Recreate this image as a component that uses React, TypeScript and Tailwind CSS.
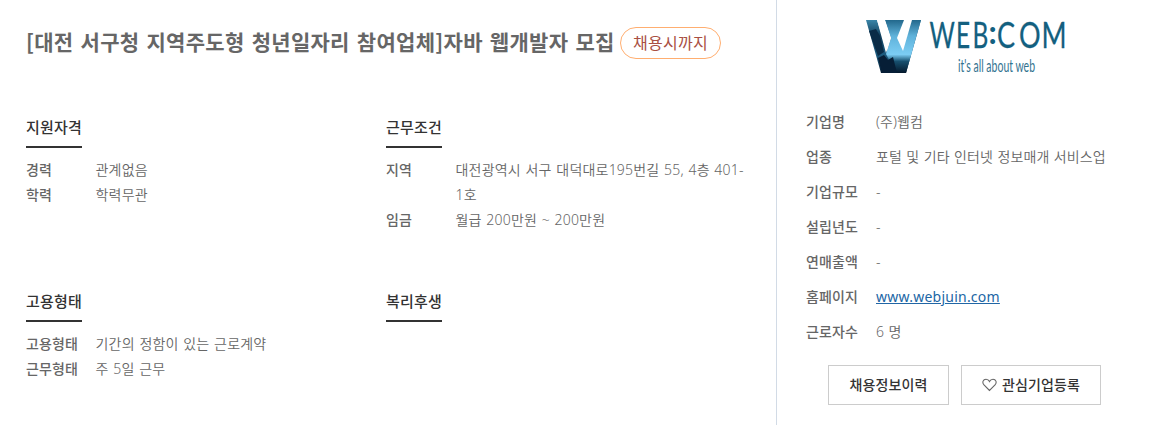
import React from 'react';

type Item = { label: string; value: string };

const sections: { title: string; items: Item[] }[] = [
  {
    title: '지원자격',
    items: [
      { label: '경력', value: '관계없음' },
      { label: '학력', value: '학력무관' },
    ],
  },
  {
    title: '근무조건',
    items: [
      { label: '지역', value: '대전광역시 서구 대덕대로195번길 55, 4층 401-\n1호' },
      { label: '임금', value: '월급 200만원 ~ 200만원' },
    ],
  },
  {
    title: '고용형태',
    items: [
      { label: '고용형태', value: '기간의 정함이 있는 근로계약' },
      { label: '근무형태', value: '주 5일 근무' },
    ],
  },
  { title: '복리후생', items: [] },
];

const company: Item[] = [
  { label: '기업명', value: '(주)웹컴' },
  { label: '업종', value: '포털 및 기타 인터넷 정보매개 서비스업' },
  { label: '기업규모', value: '-' },
  { label: '설립년도', value: '-' },
  { label: '연매출액', value: '-' },
  { label: '홈페이지', value: 'www.webjuin.com' },
  { label: '근로자수', value: '6 명' },
];

const Logo = () => (
  <svg width="220" height="62" viewBox="0 0 220 62" className="block overflow-visible">
    <defs>
      <linearGradient id="mark" x1="0" y1="0" x2="0" y2="1">
        <stop offset="0" stopColor="#3b86a8" />
        <stop offset="0.3" stopColor="#123f5c" />
        <stop offset="0.65" stopColor="#1d5c80" />
        <stop offset="1" stopColor="#041c33" />
      </linearGradient>
      <linearGradient id="markLight" x1="0" y1="0" x2="0" y2="1">
        <stop offset="0" stopColor="#22688c" />
        <stop offset="0.3" stopColor="#5fb2da" />
        <stop offset="0.65" stopColor="#7ccdf4" />
        <stop offset="0.78" stopColor="#17506f" />
        <stop offset="1" stopColor="#04182c" />
      </linearGradient>
    </defs>
    <path d="M0 2H11L20 35L25 20L19 2H55L40 55H30L27 48L25 55H15Z" fill="url(#mark)" />
    <path d="M19 2H55L40 55H30L20 36L25 20Z" fill="url(#markLight)" />
    {/* white cuts between the strokes */}
    <path d="M11 2H19L25 20L21 33Z" fill="#fff" />
    <path d="M38 2H46L37 33L31 20Z" fill="#fff" />
    {/* dark facets */}
    <path d="M3 13L10 11L14 18L18 34L12 38Z" fill="#0a2c47" />
    <path d="M12 40L18 37L22 42L27 39L31 55H25L16 55Z" fill="#061e36" />
    <g fontFamily="Lato, sans-serif" fontSize="37" fill="#13607f">
      <text transform="translate(63.5 30) scale(0.66 1)" x="0 40 65" stroke="#13607f" strokeWidth="0.3">WEB</text>
      <text transform="translate(122.5 26)" fontSize="32" fontWeight="700">:</text>
      <text transform="translate(131 30) scale(0.73 1)" x="0 30 61" stroke="#13607f" strokeWidth="0.3">COM</text>
    </g>
    <text x="92" y="54" textLength="77" lengthAdjust="spacingAndGlyphs" fontFamily="Lato, sans-serif" fontSize="17" fill="#337390">it's all about web</text>
  </svg>
);

function App() {
  return (
    <div className="flex h-[425px] w-[1149px] overflow-hidden bg-white font-['Noto_Sans_CJK_KR',sans-serif] text-sm text-[#666]">
      <main className="w-[777px] shrink-0 border-r border-[#d2dbe6] pl-[26px]">
        <div className="flex items-center pt-[26px]">
          <h1 className="w-[594px] pb-[2px] text-[21px] leading-[31px] font-bold tracking-[0.3px] whitespace-nowrap [word-spacing:2px]">
            [대전 서구청 지역주도형 청년일자리 참여업체]자바 웹개발자 모집
          </h1>
          <span className="flex h-8 w-[101px] items-center justify-center rounded-full border border-[#ffae70] pb-px text-base tracking-[0.3px] whitespace-nowrap text-[#a94f43]">
            채용시까지
          </span>
        </div>

        <div className="mt-[49px] grid w-[720px] grid-cols-2 grid-rows-[174px_auto]">
          {sections.map((section) => (
            <section key={section.title}>
              <h2 className="inline-block h-10 border-b-2 border-[#333] text-[15px] leading-[38px] font-medium tracking-[0.2px] text-[#333]">
                {section.title}
              </h2>
              <dl className="mt-[9px]">
                {section.items.map((item) => (
                  <div key={item.label} className="flex leading-[25px]">
                    <dt className="w-[69.5px] shrink-0 font-medium tracking-[0.12px]">{item.label}</dt>
                    <dd className="w-[300px] font-['Noto_Sans','Noto_Sans_CJK_KR',sans-serif] font-[350] tracking-[0.2px] whitespace-pre-line [word-spacing:0.8px]">
                      {item.value}
                    </dd>
                  </div>
                ))}
              </dl>
            </section>
          ))}
        </div>
      </main>

      <aside className="flex-1 pt-[18px] pl-[29px]">
        <div className="pl-[60px]">
          <Logo />
        </div>
        <dl className="mt-[24px]">
          {company.map((item) => (
            <div key={item.label} className="flex h-[35px] items-center leading-[25px]">
              <dt className="w-[70px] shrink-0 font-medium tracking-[0.12px]">{item.label}</dt>
              <dd className="font-['Noto_Sans','Noto_Sans_CJK_KR',sans-serif] font-[350] tracking-[0.12px] whitespace-nowrap [word-spacing:0.6px]">
                {item.label === '홈페이지' ? (
                  <a href="#" className="font-normal tracking-[0.24px] text-[#2166a5] underline">{item.value}</a>
                ) : (
                  item.value
                )}
              </dd>
            </div>
          ))}
        </dl>
        <div className="mt-[16px] ml-[22px] flex gap-3 font-medium tracking-[0.15px] text-[#333]">
          <button className="flex h-10 w-[121px] items-center justify-center border border-[#ccc] pb-[2px] whitespace-nowrap">
            채용정보이력
          </button>
          <button className="flex h-10 w-[140px] items-center justify-center gap-[5px] border border-[#ccc] pb-[2px] whitespace-nowrap">
            <svg width="15" height="14" viewBox="0 0 15 14" fill="none" stroke="#666" strokeWidth="1.1" className="mt-[2px]">
              <path d="M7.5 12.5L2 7C-0.3 4.3 1.2 1.2 4 1.2C5.6 1.2 6.8 2 7.5 3.4C8.2 2 9.4 1.2 11 1.2C13.8 1.2 15.3 4.3 13 7Z" />
            </svg>
            관심기업등록
          </button>
        </div>
      </aside>
    </div>
  );
}

export default App;
